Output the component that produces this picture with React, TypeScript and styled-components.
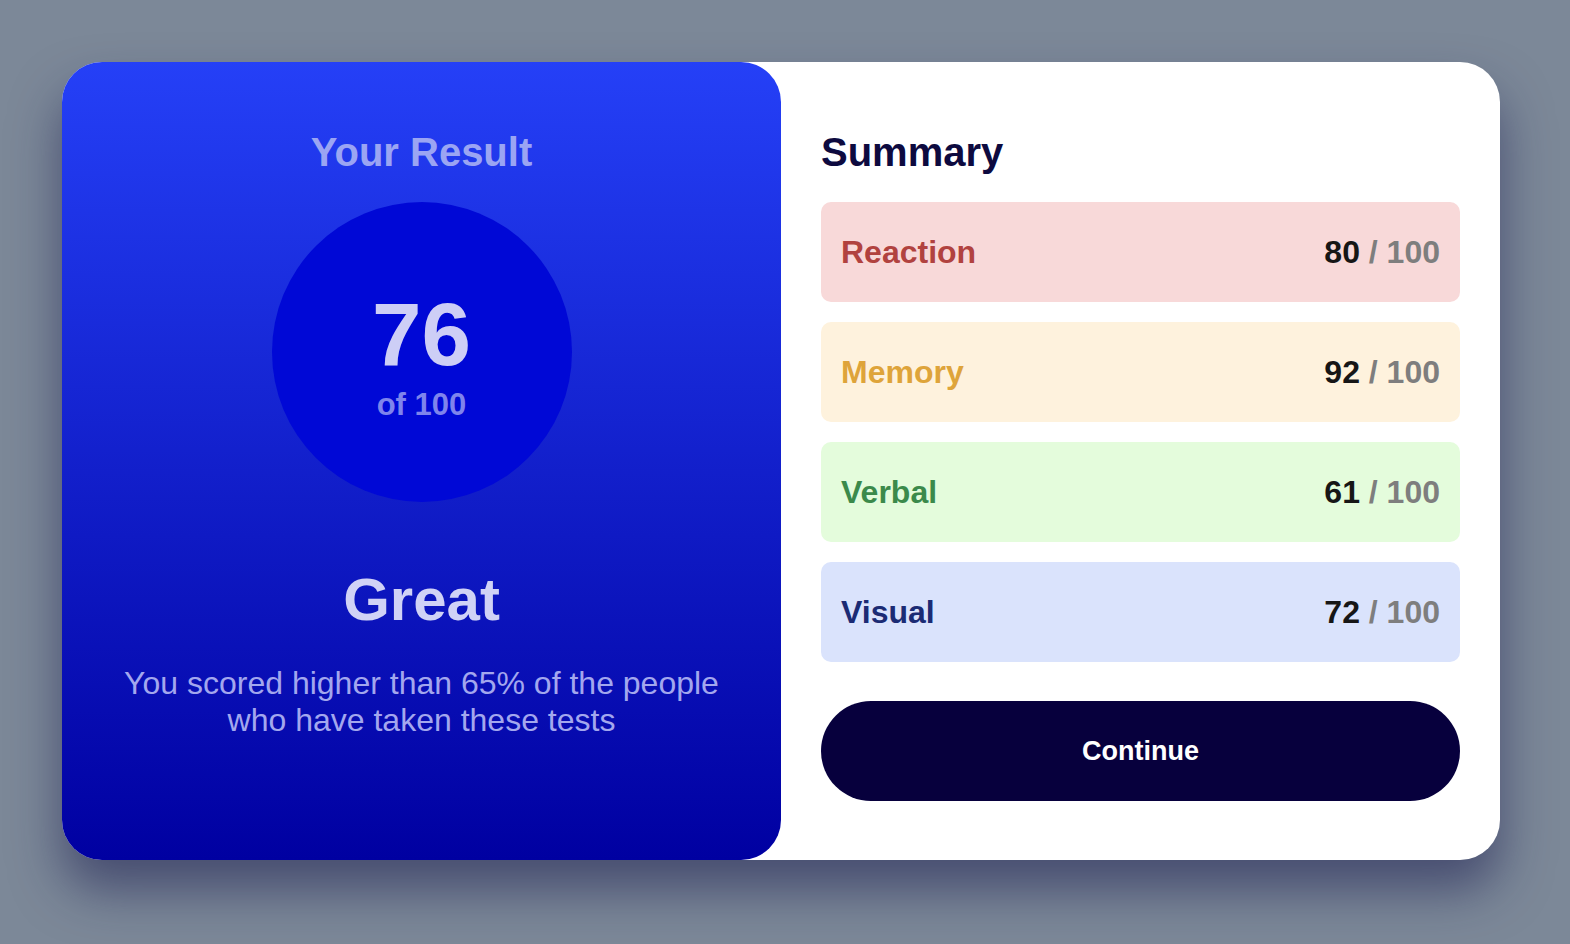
import React from "react";
import styled, { createGlobalStyle } from "styled-components";

const Global = createGlobalStyle`
  html, body { margin: 0; padding: 0; }
  body {
    background: #7c8898;
    font-family: "Liberation Sans", Arial, sans-serif;
    width: 1570px;
    height: 944px;
    overflow: hidden;
  }
`;

const Page = styled.div`
  padding: 62px 70px 84px 62px;
  box-sizing: border-box;
  width: 1570px;
  height: 944px;
`;

const Card = styled.main`
  display: grid;
  grid-template-columns: 719px 1fr;
  height: 798px;
  background: #ffffff;
  border-radius: 40px;
  box-shadow: 0 30px 50px rgba(28, 30, 80, 0.55);
`;

const ResultPanel = styled.section`
  display: flex;
  flex-direction: column;
  align-items: center;
  padding-top: 67px;
  border-radius: 40px;
  background: linear-gradient(180deg, #2540f7 0%, #0000a1 100%);
`;

const Heading = styled.h2<{ $tone: string }>`
  margin: 0;
  font-size: 40px;
  line-height: 46px;
  font-weight: 700;
  color: ${(p) => p.$tone};
`;

const Circle = styled.div`
  margin-top: 27px;
  width: 300px;
  height: 300px;
  border-radius: 50%;
  background: #0008d6;
  display: flex;
  flex-direction: column;
  align-items: center;
  justify-content: center;
  padding-top: 5px;
  box-sizing: border-box;
`;

const BigScore = styled.div`
  font-size: 89px;
  line-height: 88px;
  font-weight: 700;
  color: #cdcef6;
`;

const OutOf = styled.div`
  margin-top: 12px;
  font-size: 31px;
  line-height: 30px;
  font-weight: 700;
  color: #7f84ec;
`;

const Verdict = styled.div`
  margin-top: 63px;
  font-size: 60px;
  line-height: 69px;
  font-weight: 700;
  color: #d0d2f6;
`;

const Blurb = styled.p`
  margin: 31px 0 0;
  font-size: 32px;
  line-height: 37px;
  text-align: center;
  color: #a3a7ee;
`;

const SummaryPanel = styled.section`
  display: flex;
  flex-direction: column;
  padding: 67px 40px 0;
`;

const Rows = styled.div`
  margin-top: 27px;
  display: flex;
  flex-direction: column;
  gap: 20px;
`;

const Row = styled.div<{ $bg: string }>`
  height: 100px;
  box-sizing: border-box;
  padding: 0 20px;
  border-radius: 10px;
  background: ${(p) => p.$bg};
  display: flex;
  align-items: center;
  justify-content: space-between;
  font-size: 32px;
  font-weight: 700;
`;

const Label = styled.span<{ $tone: string }>`
  color: ${(p) => p.$tone};
`;

const Score = styled.span`
  color: #161616;
`;

const Total = styled.span`
  color: #7e7e7e;
`;

const ContinueButton = styled.button`
  margin-top: 39px;
  height: 100px;
  border: none;
  border-radius: 50px;
  background: #07003d;
  color: #ffffff;
  font-family: "Liberation Sans", Arial, sans-serif;
  font-size: 27px;
  font-weight: 700;
  cursor: pointer;
`;

const items = [
  { label: "Reaction", score: 80, bg: "#f8d9d9", tone: "#b1423f" },
  { label: "Memory", score: 92, bg: "#fef2dd", tone: "#dea43a" },
  { label: "Verbal", score: 61, bg: "#e4fcdc", tone: "#3b8a4b" },
  { label: "Visual", score: 72, bg: "#dae3fc", tone: "#1b2b74" },
];

export default function App() {
  return (
    <>
      <Global />
      <Page>
        <Card>
          <ResultPanel>
            <Heading $tone="#9ba5f3">Your Result</Heading>
            <Circle>
              <BigScore>76</BigScore>
              <OutOf>of 100</OutOf>
            </Circle>
            <Verdict>Great</Verdict>
            <Blurb>
              You scored higher than 65% of the people
              <br />
              who have taken these tests
            </Blurb>
          </ResultPanel>
          <SummaryPanel>
            <Heading $tone="#0d0a3f">Summary</Heading>
            <Rows>
              {items.map((it) => (
                <Row key={it.label} $bg={it.bg}>
                  <Label $tone={it.tone}>{it.label}</Label>
                  <span>
                    <Score>{it.score}</Score> <Total>/ 100</Total>
                  </span>
                </Row>
              ))}
            </Rows>
            <ContinueButton>Continue</ContinueButton>
          </SummaryPanel>
        </Card>
      </Page>
    </>
  );
}
